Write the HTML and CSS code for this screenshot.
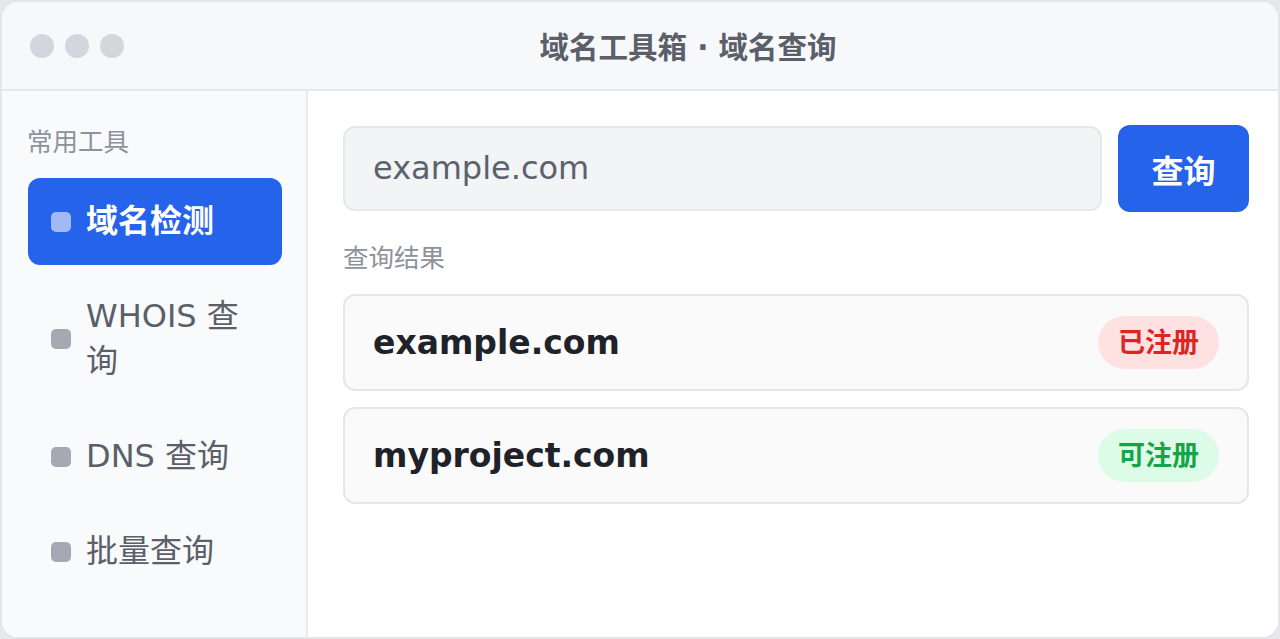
FILE: index.html
```html
<!DOCTYPE html>
<html lang="zh">
<head>
<meta charset="utf-8">
<title>域名工具箱 · 域名查询</title>
<link rel="stylesheet" href="styles.css">
</head>
<body>
<div class="window">
  <header class="titlebar">
    <div class="dots"><span class="dot"></span><span class="dot"></span><span class="dot"></span></div>
    <div class="title">域名工具箱 · 域名查询</div>
  </header>
  <div class="body">
    <aside class="sidebar">
      <div class="side-label">常用工具</div>
      <nav class="nav">
        <a class="nav-item active"><span class="sq"></span><span class="nav-text">域名检测</span></a>
        <a class="nav-item"><span class="sq"></span><span class="nav-text">WHOIS 查询</span></a>
        <a class="nav-item"><span class="sq"></span><span class="nav-text">DNS 查询</span></a>
        <a class="nav-item"><span class="sq"></span><span class="nav-text">批量查询</span></a>
      </nav>
    </aside>
    <main class="main">
      <div class="search-row">
        <div class="input">example.com</div>
        <button class="btn">查询</button>
      </div>
      <div class="section-label">查询结果</div>
      <div class="results">
        <div class="card">
          <span class="domain">example.com</span>
          <span class="badge taken">已注册</span>
        </div>
        <div class="card">
          <span class="domain">myproject.com</span>
          <span class="badge free">可注册</span>
        </div>
      </div>
    </main>
  </div>
</div>
</body>
</html>
```

FILE: styles.css
```css
* { box-sizing: border-box; }
html, body { margin: 0; padding: 0; }
body {
  background: #e5e7eb;
  font-family: "DejaVu Sans", "Noto Sans CJK SC", sans-serif;
  width: 1280px;
  height: 639px;
  overflow: hidden;
}
.window {
  width: 1280px;
  height: 639px;
  border: 2px solid #e3e5ea;
  border-radius: 18px;
  background: #ffffff;
  overflow: hidden;
  display: flex;
  flex-direction: column;
}
.titlebar {
  height: 89px;
  flex: none;
  background: #f7f8fa;
  border-bottom: 2px solid #e6e8ec;
  display: flex;
  align-items: center;
  padding: 0 28px;
}
.dots { display: flex; gap: 11px; }
.dot {
  width: 24px; height: 24px; border-radius: 50%;
  background: #d4d6dd;
}
.title {
  flex: 1;
  text-align: center;
  font-size: 29.5px;
  font-weight: 700;
  color: #5a5f6a;
  padding-left: 2px;
  margin-top: -2px;
}
.body {
  flex: 1;
  display: flex;
  min-height: 0;
}
.sidebar {
  width: 306px;
  flex: none;
  background: #f9fafb;
  border-right: 2px solid #e8eaee;
  padding: 34px 24px 0 26px;
}
.side-label {
  font-size: 25.5px;
  line-height: 35px;
  color: #8d929b;
  margin-bottom: 18px;
  margin-left: -1px;
}
.nav { display: flex; flex-direction: column; gap: 8px; }
.nav-item {
  display: flex;
  align-items: center;
  gap: 16px;
  padding: 21px 23px;
  border-radius: 12px;
  font-size: 32px;
  line-height: 45px;
  color: #5a5f6a;
}
.nav-item .sq {
  width: 20px; height: 20px; border-radius: 5px;
  background: #a6a9b1;
  flex: none;
}
.nav-item .nav-text { margin-left: -1px; }
.nav-item.active {
  background: #2563eb;
  color: #ffffff;
  font-weight: 700;
}
.nav-item.active .sq { background: #a1b9f5; }
.main {
  flex: 1;
  padding: 34px 29px 0 35px;
  background: #ffffff;
}
.search-row { display: flex; gap: 16px; align-items: stretch; }
.input {
  flex: 1;
  background: #f3f4f6;
  border: 2px solid #e5e7eb;
  border-radius: 12px;
  padding: 18px 28px;
  font-size: 32px;
  line-height: 45px;
  color: #5b616d;
  margin: 1px 0;
}
.btn {
  width: 131px;
  border: none;
  border-radius: 12px;
  background: #2563eb;
  color: #ffffff;
  font-family: inherit;
  font-size: 32px;
  font-weight: 700;
  padding: 0;
}
.section-label {
  font-size: 25.5px;
  line-height: 35px;
  color: #8d929b;
  margin-top: 29px;
  margin-bottom: 18px;
}
.results { display: flex; flex-direction: column; gap: 16px; }
.card {
  display: flex;
  align-items: center;
  justify-content: space-between;
  background: #fafafa;
  border: 2px solid #e5e7eb;
  border-radius: 12px;
  padding: 20px 28px;
}
.domain {
  font-size: 33px;
  font-weight: 700;
  color: #1f2229;
}
.badge {
  font-size: 27px;
  font-weight: 700;
  line-height: 33px;
  padding: 10px 20px;
  border-radius: 999px;
}
.badge.taken { background: #fee2e2; color: #dc2626; }
.badge.free { background: #dcfce7; color: #16a34a; }
```
